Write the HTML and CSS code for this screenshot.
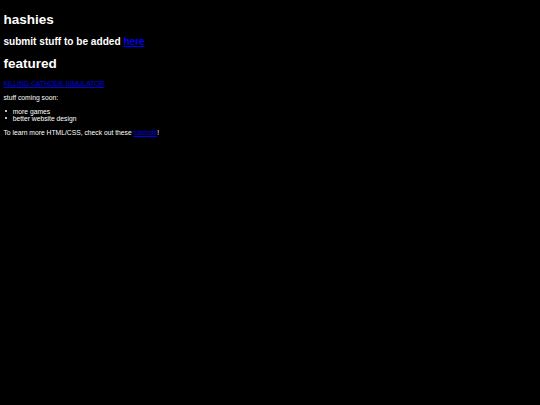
FILE: index.html
```html
<!DOCTYPE html>
<html class="page">
<head>
<meta charset="utf-8">
<link rel="stylesheet" href="styles.css">
</head>
<body class="body">
<h1 class="title">hashies</h1>
<h2 class="sub">submit stuff to be added <a class="link" href="#">here</a></h2>
<h1 class="title">featured</h1>
<p class="text"><a class="link" href="#">KILLING CATHODE SIMULATOR</a></p>
<p class="text">stuff coming soon:</p>
<ul class="list">
<li class="item">more games</li>
<li class="item">better website design</li>
</ul>
<p class="text">To learn more HTML/CSS, check out these <a class="link" href="#">tutorials</a>!</p>
</body>
</html>
```
FILE: styles.css
```css
.page {
  background: #000;
}
.body {
  margin: 3.4px;
  background: #000;
  color: #fff;
  font-family: "Liberation Sans", Arial, sans-serif;
  font-size: 6.75px;
}
.title {
  font-size: 13.5px;
  font-weight: bold;
  margin: 9px 0;
}
.sub {
  font-size: 10.1px;
  font-weight: bold;
  margin: 8.4px 0;
}
.text {
  margin: 6.75px 0;
}
.list {
  margin: 6.75px 0;
  padding-left: 9.3px;
  list-style: none;
}
.item::before {
  content: "";
  display: inline-block;
  width: 2px;
  height: 2px;
  border-radius: 50%;
  background: #fff;
  margin-left: -8.2px;
  margin-right: 6.2px;
  vertical-align: 1.5px;
}
.link {
  color: #0000ee;
}
```
